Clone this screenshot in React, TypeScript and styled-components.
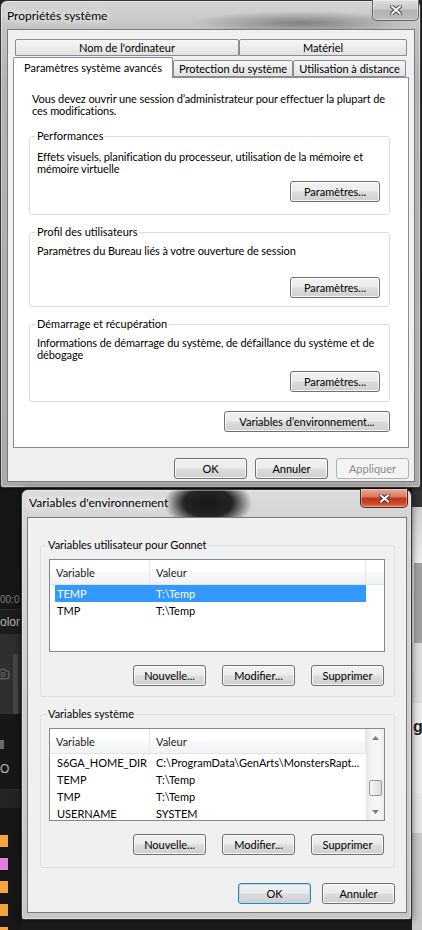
import * as React from 'react';
import styled, { createGlobalStyle } from 'styled-components';
import { Camera } from 'lucide-react';

const uiFont = `Lato, "Liberation Sans", Arial, sans-serif`;

const GlobalStyle = createGlobalStyle`
  html, body {
    margin: 0;
    padding: 0;
    background: #141414;
  }
  body {
    font-family: ${uiFont};
    font-size: 11px;
    color: #000;
  }
`;

interface EnvVar {
  name: string;
  value: string;
  selected?: boolean;
}

const userVars: EnvVar[] = [
  { name: 'TEMP', value: 'T:\\Temp', selected: true },
  { name: 'TMP', value: 'T:\\Temp' },
];

const systemVars: EnvVar[] = [
  { name: 'S6GA_HOME_DIR', value: 'C:\\ProgramData\\GenArts\\MonstersRapt...' },
  { name: 'TEMP', value: 'T:\\Temp' },
  { name: 'TMP', value: 'T:\\Temp' },
  { name: 'USERNAME', value: 'SYSTEM' },
];

const swatches = ['#f3a63b', '#e47fe0', '#f3a63b', '#f3a63b', '#f3a63b'];

/* ---------- desktop behind the dialogs ---------- */

const Desktop = styled.div`
  position: relative;
  width: 422px;
  height: 930px;
  overflow: hidden;
  display: flex;
  flex-direction: column;
  background: #141414;
  font-family: ${uiFont};
  font-size: 11px;
`;

const BackdropTop = styled.div`
  flex: 0 0 487px;
  background: #262626;
`;

const BackdropBottom = styled.div`
  flex: 1;
  display: flex;
  min-height: 0;
`;

const EditorPanel = styled.div`
  flex: 0 0 21px;
  display: flex;
  flex-direction: column;
  overflow: hidden;
  background: #171717;
`;

const EditorBlock = styled.div<{ $h: number; $bg?: string }>`
  flex: 0 0 ${p => p.$h}px;
  box-sizing: border-box;
  background: ${p => p.$bg ?? 'transparent'};
  overflow: hidden;
`;

const Timecode = styled.div`
  flex: 0 0 19px;
  box-sizing: border-box;
  line-height: 18px;
  font-family: "Liberation Sans", sans-serif;
  font-size: 10px;
  color: #7c7c7c;
  white-space: nowrap;
  border-bottom: 1px solid #2c2c2c;
`;

const PanelLabel = styled.div`
  flex: 0 0 24px;
  line-height: 24px;
  font-family: "Liberation Sans", sans-serif;
  font-size: 12px;
  color: #b3b3b3;
  white-space: nowrap;
  background: #1c1c1c;
`;

const Preview = styled.div`
  flex: 0 0 80px;
  display: flex;
  align-items: flex-end;
  background: #2f2f2f;
`;

const PreviewIcon = styled.div`
  flex: 1;
  align-self: center;
  margin-left: -4px;
  color: #595959;
  line-height: 0;
`;

const PreviewBar = styled.div`
  flex: 0 0 5px;
  height: 60px;
  margin-right: 3px;
  background: #474747;
`;

const ToolArea = styled.div`
  flex: 0 0 76px;
  display: flex;
  flex-direction: column;
  padding-top: 26px;
  box-sizing: border-box;
  border-bottom: 1px solid #2a2a2a;
`;

const ToolMark = styled.div`
  width: 4px;
  height: 9px;
  background: #6a6a6a;
`;

const ToolText = styled.div`
  margin-top: 13px;
  font-family: "Liberation Sans", sans-serif;
  font-size: 12px;
  line-height: 14px;
  color: #b9b9b9;
`;

const SwatchList = styled.div`
  flex: 1;
  display: flex;
  flex-direction: column;
  gap: 11px;
  padding-top: 27px;
`;

const Swatch = styled.div<{ $color: string }>`
  width: 8px;
  height: 12px;
  background: ${p => p.$color};
`;

const DesktopMiddle = styled.div`
  flex: 1;
  background: #1b1b1b;
`;

const SidePanel = styled.div`
  flex: 0 0 10px;
  display: flex;
  flex-direction: column;
  overflow: hidden;
`;

const SideHeading = styled.div`
  flex: 0 0 90px;
  background: #ebebeb;
  font-family: "Liberation Sans", sans-serif;
  font-weight: bold;
  font-size: 16px;
  line-height: 20px;
  padding-top: 14px;
  padding-left: 1px;
  box-sizing: border-box;
  color: #1d1d1d;
`;

/* ---------- windows ---------- */

const WindowFrame = styled.section<{
  $x: number;
  $y: number;
  $w: number;
  $h: number;
  $pad: string;
  $glass: string;
}>`
  position: absolute;
  left: ${p => p.$x}px;
  top: ${p => p.$y}px;
  width: ${p => p.$w}px;
  height: ${p => p.$h}px;
  box-sizing: border-box;
  display: flex;
  flex-direction: column;
  padding: ${p => p.$pad};
  border: 1px solid #343434;
  border-radius: 7px 7px 3px 3px;
  background: ${p => p.$glass};
  box-shadow: inset 0 0 0 1px rgba(255, 255, 255, 0.4), 0 0 7px rgba(0, 0, 0, 0.6);
`;

const TitleBar = styled.header<{ $h: number; $indent: number; $lift: number }>`
  flex: 0 0 ${p => p.$h}px;
  display: flex;
  align-items: center;
  padding-left: ${p => p.$indent}px;
  padding-bottom: ${p => p.$lift}px;
  box-sizing: border-box;
`;

const TitleText = styled.span`
  font-size: 12px;
  color: #000;
  white-space: nowrap;
  text-shadow: 0 0 6px #fff, 0 0 10px rgba(255, 255, 255, 0.9), 0 0 14px rgba(255, 255, 255, 0.8);
`;

const CloseButton = styled.div<{ $active?: boolean; $w: number; $h: number; $mr: number }>`
  margin-left: auto;
  align-self: flex-start;
  margin-top: -1px;
  margin-right: ${p => p.$mr}px;
  flex: 0 0 ${p => p.$w}px;
  height: ${p => p.$h}px;
  box-sizing: border-box;
  display: flex;
  align-items: center;
  justify-content: center;
  border: 1px solid ${p => (p.$active ? '#5a261c' : '#666')};
  border-top: none;
  border-radius: 0 0 5px 5px;
  background: ${p =>
    p.$active
      ? 'linear-gradient(180deg, #e9ab9c 0%, #d97a63 42%, #c3361b 52%, #c94526 78%, #dd7a58 100%)'
      : 'linear-gradient(180deg, #dedede 0%, #c9c9c9 45%, #b2b2b2 52%, #bdbdbd 100%)'};
  box-shadow: inset 0 0 0 1px rgba(255, 255, 255, 0.35);
`;

const Client = styled.div<{ $pad: string }>`
  flex: 1;
  min-height: 0;
  display: flex;
  flex-direction: column;
  background: #f0f0f0;
  border: 1px solid #7b7b7b;
  padding: ${p => p.$pad};
`;

/* ---------- tabs ---------- */

const TabRow = styled.div<{ $inset?: number; $align: string }>`
  flex: 0 0 18px;
  display: flex;
  align-items: ${p => p.$align};
  padding-left: ${p => p.$inset ?? 0}px;
`;

const Tab = styled.div<{ $w: number; $active?: boolean }>`
  flex: 0 0 ${p => p.$w}px;
  box-sizing: border-box;
  height: ${p => (p.$active ? 21 : 17)}px;
  margin-bottom: ${p => (p.$active ? -1 : 0)}px;
  position: relative;
  z-index: ${p => (p.$active ? 1 : 0)};
  display: flex;
  align-items: center;
  justify-content: center;
  padding-bottom: ${p => (p.$active ? 1 : 0)}px;
  border: 1px solid #898c95;
  border-bottom: ${p => (p.$active ? 'none' : '1px solid #898c95')};
  border-radius: 2px 2px 0 0;
  background: ${p => (p.$active ? '#fff' : 'linear-gradient(180deg, #f6f6f6 0%, #ececec 50%, #e1e1e1 100%)')};
  white-space: nowrap;
`;

const TabPanel = styled.div`
  flex: 0 0 371px;
  box-sizing: border-box;
  display: flex;
  flex-direction: column;
  border: 1px solid #898c95;
  background: #fff;
  padding: 15px 18px 0 15px;
`;

const BodyText = styled.p<{ $indent?: number; $after?: number }>`
  margin: 0 0 ${p => p.$after ?? 0}px ${p => p.$indent ?? 0}px;
  line-height: 12px;
  letter-spacing: -0.1px;
  white-space: nowrap;
`;

const GroupBox = styled.fieldset<{
  $pt: number;
  $pb: number;
  $pl: number;
  $pr: number;
  $gap?: number;
}>`
  margin: ${p => p.$gap ?? 0}px 0 0 0;
  min-width: 0;
  border: 1px solid #d5dfe5;
  border-radius: 3px;
  padding: ${p => `${p.$pt}px ${p.$pr}px ${p.$pb}px ${p.$pl}px`};
  display: flex;
  flex-direction: column;
`;

const GroupLegend = styled.legend<{ $shift: number }>`
  padding: 0 1px;
  margin-left: ${p => p.$shift}px;
  line-height: 12px;
  font-size: 11px;
  color: #000;
`;

const PushButton = styled.button<{ $w: number; $default?: boolean }>`
  flex: none;
  width: ${p => p.$w}px;
  height: 21px;
  padding: 0;
  box-sizing: border-box;
  font-family: ${uiFont};
  font-size: 11px;
  line-height: 1;
  color: #000;
  white-space: nowrap;
  border: 1px solid ${p => (p.$default ? '#3c7fb1' : '#707070')};
  border-radius: 3px;
  background: linear-gradient(180deg, #f2f2f2 0%, #ebebeb 48%, #dddddd 52%, #cfcfcf 100%);
  box-shadow: inset 0 0 0 1px ${p => (p.$default ? '#a6dcf6' : 'rgba(255, 255, 255, 0.8)')};

  &:disabled {
    color: #8a8a8a;
    border-color: #adb2b5;
    background: #f4f4f4;
    box-shadow: none;
  }
`;

const SideButton = styled(PushButton)<{ $top: number }>`
  margin-top: ${p => p.$top}px;
  align-self: flex-end;
`;

const ButtonRow = styled.div<{ $gap: number; $top: number; $inset?: number }>`
  display: flex;
  justify-content: flex-end;
  gap: ${p => p.$gap}px;
  margin-top: ${p => p.$top}px;
  padding-right: ${p => p.$inset ?? 0}px;
`;

/* ---------- list view ---------- */

const ListView = styled.div`
  flex: 0 0 93px;
  box-sizing: border-box;
  display: flex;
  overflow: hidden;
  border: 1px solid #828790;
  background: #fff;
`;

const ListContent = styled.div`
  flex: 1;
  min-width: 0;
  display: flex;
  flex-direction: column;
`;

const ListHeader = styled.div`
  flex: 0 0 25px;
  box-sizing: border-box;
  display: flex;
  border-bottom: 1px solid #e2e3e6;
  background: linear-gradient(180deg, #ffffff 0%, #ffffff 45%, #f7f8fa 55%, #f2f3f5 100%);
`;

const HeaderCell = styled.div<{ $w?: number }>`
  ${p => (p.$w ? `flex: 0 0 ${p.$w}px;` : 'flex: 1;')}
  box-sizing: border-box;
  display: flex;
  align-items: center;
  padding-left: ${p => (p.$w ? 6 : 0)}px;
  border-right: ${p => (p.$w ? '1px solid #e3e5e9' : 'none')};
  color: #222;
  white-space: nowrap;
`;

const ListRows = styled.div`
  display: flex;
  flex-direction: column;
  padding-left: 5px;
`;

const ListRow = styled.div<{ $selected?: boolean }>`
  display: flex;
  align-items: center;
  width: 311px;
  height: 17px;
  flex-shrink: 0;
  background: ${p => (p.$selected ? '#3399ff' : 'transparent')};
  color: ${p => (p.$selected ? '#fff' : '#000')};
`;

const NameCell = styled.span`
  flex: 0 0 94px;
  box-sizing: border-box;
  padding-left: 2px;
  white-space: nowrap;
  overflow: hidden;
`;

const ValueCell = styled.span`
  flex: 1;
  min-width: 0;
  padding-left: 7px;
  white-space: nowrap;
  overflow: hidden;
`;

const ScrollBar = styled.div`
  flex: 0 0 18px;
  display: flex;
  flex-direction: column;
  background: linear-gradient(90deg, #e6e6e6 0%, #f3f3f3 30%, #f6f6f6 70%, #ececec 100%);
`;

const ScrollArrow = styled.div`
  flex: 0 0 17px;
  display: flex;
  align-items: center;
  justify-content: center;
`;

const ScrollTrack = styled.div`
  flex: 1;
  display: flex;
  flex-direction: column;
  align-items: center;
`;

const ScrollThumb = styled.div<{ $offset: number; $size: number }>`
  margin-top: ${p => p.$offset}px;
  width: 13px;
  height: ${p => p.$size}px;
  box-sizing: border-box;
  border: 1px solid #979797;
  border-radius: 2px;
  background: linear-gradient(90deg, #f4f4f4 0%, #e9e9e9 50%, #dcdcdc 100%);
`;

/* ---------- pieces ---------- */

const CloseGlyph = ({ w, h }: { w: number; h: number }) => (
  <svg width={w} height={h} viewBox={`0 0 ${w} ${h}`}>
    <path
      d={`M2 1.5 L${w - 2} ${h - 1.5} M${w - 2} 1.5 L2 ${h - 1.5}`}
      stroke="rgba(45,45,45,0.85)"
      strokeWidth="4"
      strokeLinecap="square"
      fill="none"
    />
    <path
      d={`M2 1.5 L${w - 2} ${h - 1.5} M${w - 2} 1.5 L2 ${h - 1.5}`}
      stroke="#f4f4f4"
      strokeWidth="2.2"
      strokeLinecap="square"
      fill="none"
    />
  </svg>
);

const Arrow = ({ down }: { down?: boolean }) => (
  <svg width="7" height="4" viewBox="0 0 7 4">
    <polygon points={down ? '0,0 7,0 3.5,4' : '0,4 7,4 3.5,0'} fill="#7c7c7c" />
  </svg>
);

const VarList = ({ rows, scroll }: { rows: EnvVar[]; scroll?: boolean }) => (
  <ListView>
    <ListContent>
      <ListHeader>
        <HeaderCell $w={100}>Variable</HeaderCell>
        <HeaderCell $w={216}>Valeur</HeaderCell>
        {!scroll && <HeaderCell />}
      </ListHeader>
      <ListRows>
        {rows.map(r => (
          <ListRow key={r.name} $selected={r.selected}>
            <NameCell>{r.name}</NameCell>
            <ValueCell>{r.value}</ValueCell>
          </ListRow>
        ))}
      </ListRows>
    </ListContent>
    {scroll && (
      <ScrollBar>
        <ScrollArrow>
          <Arrow />
        </ScrollArrow>
        <ScrollTrack>
          <ScrollThumb $offset={34} $size={16} />
        </ScrollTrack>
        <ScrollArrow>
          <Arrow down />
        </ScrollArrow>
      </ScrollBar>
    )}
  </ListView>
);

const topGlass =
  'radial-gradient(ellipse 110px 12px at 300px 22px, rgba(70,70,70,0.55), rgba(70,70,70,0)), ' +
  'linear-gradient(180deg, #d4d4d4 0px, #c3c3c3 28px, #b3b3b3 80px, #aaaaaa 100%)';

const envGlass =
  'radial-gradient(ellipse 44px 26px at 186px 13px, rgba(16,16,16,0.96) 0%, rgba(16,16,16,0.9) 55%, rgba(16,16,16,0) 100%), ' +
  'linear-gradient(180deg, #dddddd 0px, #d4d4d4 27px, #c6c6c6 100%)';

const SystemProperties = () => (
  <WindowFrame $x={0} $y={0} $w={421} $h={488} $pad="0 5px 5px 6px" $glass={topGlass}>
    <TitleBar $h={28} $indent={0} $lift={0}>
      <TitleText>Propriétés système</TitleText>
      <CloseButton $w={47} $h={21} $mr={-4}>
        <CloseGlyph w={12} h={10} />
      </CloseButton>
    </TitleBar>
    <Client $pad="9px 5px 0 5px">
      <TabRow $inset={2} $align="flex-start">
        <Tab $w={224}>Nom de l'ordinateur</Tab>
        <Tab $w={168}>Matériel</Tab>
      </TabRow>
      <TabRow $align="flex-end">
        <Tab $w={160} $active>
          Paramètres système avancés
        </Tab>
        <Tab $w={120}>Protection du système</Tab>
        <Tab $w={113}>Utilisation à distance</Tab>
      </TabRow>
      <TabPanel>
        <BodyText $indent={3} $after={13}>
          Vous devez ouvrir une session d’administrateur pour effectuer la plupart de
          <br />
          ces modifications.
        </BodyText>
        <GroupBox $pt={9} $pb={12} $pl={7} $pr={9}>
          <GroupLegend $shift={-1}>Performances</GroupLegend>
          <BodyText>
            Effets visuels, planification du processeur, utilisation de la mémoire et
            <br />
            mémoire virtuelle
          </BodyText>
          <SideButton $w={90} $top={6}>
            Paramètres...
          </SideButton>
        </GroupBox>
        <GroupBox $pt={7} $pb={8} $pl={7} $pr={9} $gap={11}>
          <GroupLegend $shift={-1}>Profil des utilisateurs</GroupLegend>
          <BodyText>Paramètres du Bureau liés à votre ouverture de session</BodyText>
          <SideButton $w={90} $top={20}>
            Paramètres...
          </SideButton>
        </GroupBox>
        <GroupBox $pt={7} $pb={9} $pl={7} $pr={9} $gap={11}>
          <GroupLegend $shift={-1}>Démarrage et récupération</GroupLegend>
          <BodyText>
            Informations de démarrage du système, de défaillance du système et de
            <br />
            débogage
          </BodyText>
          <SideButton $w={90} $top={10}>
            Paramètres...
          </SideButton>
        </GroupBox>
        <SideButton $w={166} $top={9}>
          Variables d’environnement...
        </SideButton>
      </TabPanel>
      <ButtonRow $gap={8} $top={10}>
        <PushButton $w={73}>OK</PushButton>
        <PushButton $w={73}>Annuler</PushButton>
        <PushButton $w={73} disabled>
          Appliquer
        </PushButton>
      </ButtonRow>
    </Client>
  </WindowFrame>
);

const EnvironmentVariables = () => (
  <WindowFrame $x={21} $y={489} $w={391} $h={431} $pad="0 4px 6px 5px" $glass={envGlass}>
    <TitleBar $h={27} $indent={2} $lift={3}>
      <TitleText>Variables d'environnement</TitleText>
      <CloseButton $active $w={48} $h={19} $mr={-1}>
        <CloseGlyph w={11} h={9} />
      </CloseButton>
    </TitleBar>
    <Client $pad="21px 11px 0 12px">
      <GroupBox $pt={8} $pb={10} $pl={8} $pr={9}>
        <GroupLegend $shift={-2}>Variables utilisateur pour Gonnet</GroupLegend>
        <VarList rows={userVars} />
        <ButtonRow $gap={16} $top={13} $inset={1}>
          <PushButton $w={73}>Nouvelle...</PushButton>
          <PushButton $w={73}>Modifier...</PushButton>
          <PushButton $w={73}>Supprimer</PushButton>
        </ButtonRow>
      </GroupBox>
      <GroupBox $pt={8} $pb={12} $pl={8} $pr={9} $gap={11}>
        <GroupLegend $shift={-2}>Variables système</GroupLegend>
        <VarList rows={systemVars} scroll />
        <ButtonRow $gap={16} $top={13} $inset={1}>
          <PushButton $w={73}>Nouvelle...</PushButton>
          <PushButton $w={73}>Modifier...</PushButton>
          <PushButton $w={73}>Supprimer</PushButton>
        </ButtonRow>
      </GroupBox>
      <ButtonRow $gap={11} $top={15}>
        <PushButton $w={73} $default>
          OK
        </PushButton>
        <PushButton $w={73}>Annuler</PushButton>
      </ButtonRow>
    </Client>
  </WindowFrame>
);

const App = () => (
  <>
    <GlobalStyle />
    <Desktop>
      <BackdropTop />
      <BackdropBottom>
        <EditorPanel>
          <EditorBlock $h={104} />
          <Timecode>00:0</Timecode>
          <PanelLabel>olor</PanelLabel>
          <Preview>
            <PreviewIcon>
              <Camera size={14} strokeWidth={2.5} />
            </PreviewIcon>
            <PreviewBar />
          </Preview>
          <ToolArea>
            <ToolMark />
            <ToolText>O</ToolText>
          </ToolArea>
          <EditorBlock $h={18} $bg="#242424" />
          <SwatchList>
            {swatches.map((c, i) => (
              <Swatch key={i} $color={c} />
            ))}
          </SwatchList>
        </EditorPanel>
        <DesktopMiddle />
        <SidePanel>
          <EditorBlock $h={20} $bg="#333" />
          <EditorBlock $h={56} $bg="linear-gradient(180deg, #cfcfcf, #eeeeee)" />
          <EditorBlock $h={80} $bg="linear-gradient(90deg, #e8e8e8 0 2px, #a0a0a0 2px)" />
          <EditorBlock $h={60} $bg="#dcdcdc" />
          <SideHeading>g</SideHeading>
          <EditorBlock $h={40} $bg="#e4e4e4" />
          <EditorBlock $h={100} $bg="#c8c8c8" />
        </SidePanel>
      </BackdropBottom>
      <SystemProperties />
      <EnvironmentVariables />
    </Desktop>
  </>
);

export default App;
